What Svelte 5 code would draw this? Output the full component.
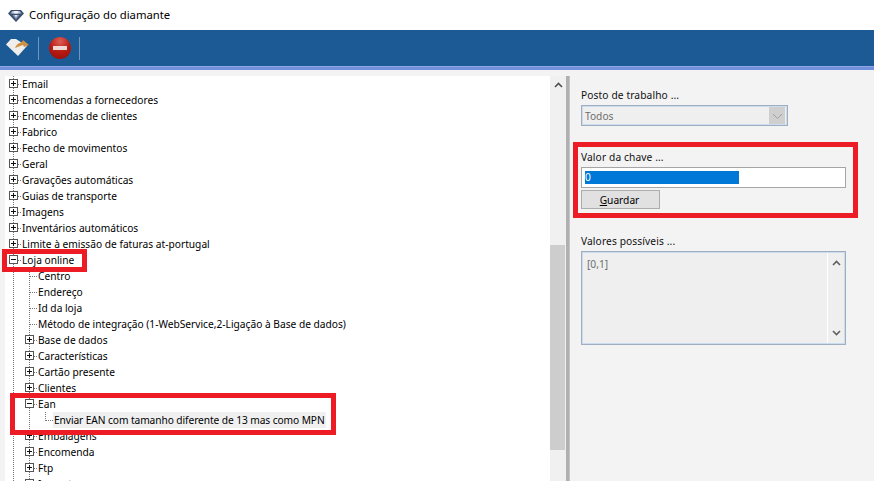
<script>
  const top = ['Email','Encomendas a fornecedores','Encomendas de clientes','Fabrico','Fecho de movimentos','Geral','Gravações automáticas','Guias de transporte','Imagens','Inventários automáticos','Limite à emissão de faturas at-portugal'];
  const rows = [
    ...top.map((t) => ({ t, d: 0, k: 'plus' })),
    { t: 'Loja online', d: 0, k: 'minus' },
    { t: 'Centro', d: 1, k: 'leaf' },
    { t: 'Endereço', d: 1, k: 'leaf' },
    { t: 'Id da loja', d: 1, k: 'leaf' },
    { t: 'Método de integração (1-WebService,2-Ligação à Base de dados)', d: 1, k: 'leaf' },
    { t: 'Base de dados', d: 1, k: 'plus' },
    { t: 'Características', d: 1, k: 'plus' },
    { t: 'Cartão presente', d: 1, k: 'plus' },
    { t: 'Clientes', d: 1, k: 'plus' },
    { t: 'Ean', d: 1, k: 'minus' },
    { t: 'Enviar EAN com tamanho diferente de 13 mas como MPN', d: 2, k: 'last', sel: true },
    { t: 'Embalagens', d: 1, k: 'plus' },
    { t: 'Encomenda', d: 1, k: 'plus' },
    { t: 'Ftp', d: 1, k: 'plus' },
    { t: 'Impostos', d: 1, k: 'plus' }
  ];
</script>

<div class="win">
  <header class="title">
    <svg class="gem" width="16" height="13" viewBox="0 0 16 13">
      <path d="M3 1h10l3 3.500L8 13 0 4.500z" fill="#3c4f72"/>
      <path d="M4.500 2 2.500 4.500h11l-2-2.500z" fill="#b8c4d6"/>
      <path d="M6.500 2 5.500 4.500h5L9.500 2z" fill="#f2f5f9"/>
      <path d="M4.500 6 8 10.500 11.500 6z" fill="#8496b3"/>
      <path d="M6.500 6 8 8.500 9.500 6z" fill="#e6ebf2"/>
    </svg>
    <span>Configuração do diamante</span>
  </header>

  <div class="toolbar">
    <svg class="tool" width="24" height="20" viewBox="0 0 24 20">
      <path d="M1 6.500 6 1h5l11 7-9 10z" fill="#efeeea"/>
      <path d="M10 10c1-3 3-5 7-6l1-2 6 5-5 2-1-2c-3 1-5 2-8 3z" fill="#cf9245"/>
    </svg>
    <i class="sep s1"></i>
    <svg class="stop" width="22" height="22" viewBox="0 0 22 22">
      <defs>
        <radialGradient id="r" cx="50%" cy="20%" r="85%">
          <stop offset="0" stop-color="#dc5f58"/>
          <stop offset=".55" stop-color="#b71c12"/>
          <stop offset="1" stop-color="#9c0f08"/>
        </radialGradient>
      </defs>
      <circle cx="11" cy="11" r="11" fill="url(#r)"/>
      <rect x="4" y="9" width="14" height="4" fill="#efd9d6"/>
    </svg>
    <i class="sep s2"></i>
  </div>
  <div class="strip"></div>

  <main class="body">
    <section class="tree">
      {#each rows as r}
        <div class="row">
          <span class="guide"></span>
          {#if r.d > 0}<span class="guide"></span>{/if}
          {#if r.d > 1}<span class="guide none"></span>{/if}
          {#if r.k === 'plus' || r.k === 'minus'}
            <span class="exp"><b class:plus={r.k === 'plus'}></b></span>
          {:else if r.k === 'last'}
            <span class="elbow"></span>
          {:else}
            <span class="tick"></span>
          {/if}
          <span class="label" class:sel={r.sel}>{r.t}</span>
        </div>
      {/each}
    </section>

    <div class="vscroll">
      <svg class="up" width="9" height="6" viewBox="0 0 9 6"><path d="M1 5l3.500-3.500L8 5" fill="none" stroke="#505050" stroke-width="1.600"/></svg>
      <div class="thumb"></div>
    </div>

    <div class="divider"></div>

    <aside class="side">
      <div class="label-r first">Posto de trabalho ...</div>
      <div class="combo">
        <span>Todos</span>
        <span class="drop"><svg width="11" height="6" viewBox="0 0 11 6"><path d="M1 1l4.500 4.500L10 1" fill="none" stroke="#a0a0a0"/></svg></span>
      </div>

      <div class="label-r second">Valor da chave ...</div>
      <div class="input"><span>0</span></div>
      <button class="save"><u>G</u>uardar</button>

      <div class="label-r third">Valores possíveis ...</div>
      <div class="area">
        <div class="text">[0,1]</div>
        <div class="abar">
          <svg width="9" height="6" viewBox="0 0 9 6"><path d="M1 5l3.500-3.500L8 5" fill="none" stroke="#606060" stroke-width="1.600"/></svg>
          <svg width="9" height="6" viewBox="0 0 9 6"><path d="M1 1l3.500 3.500L8 1" fill="none" stroke="#606060" stroke-width="1.600"/></svg>
        </div>
      </div>
    </aside>
  </main>

  <div class="mark m1"></div>
  <div class="mark m2"></div>
  <div class="mark m3"></div>
</div>

<style>
  :global(body) { margin: 0; }
  .win { position: relative; width: 874px; height: 481px; overflow: hidden; background: #f3f3f3; color: #000; font: 10.200px/16px "Noto Sans", "Open Sans", sans-serif; }
  .title { height: 30px; background: #fff; display: flex; align-items: center; gap: 5px; padding-left: 8px; font-size: 11.300px; }
  .toolbar { height: 36px; background: #1c5a96; display: flex; align-items: center; padding-left: 5px; box-sizing: border-box; }
  .tool { filter: blur(0.4px); }
  .stop { filter: blur(0.3px); }
  .sep { width: 1px; height: 23px; background: #6f97bd; }
  .s1 { margin: 0 10px 0 9px; }
  .s2 { margin-left: 8px; }
  .strip { height: 4px; background: #7390df; border-top: 1px solid #8ea6e4; box-sizing: border-box; }
  .body { display: flex; height: 411px; padding-top: 6px; box-sizing: border-box; }
  .tree { width: 545px; margin-left: 5px; box-sizing: border-box; background: #fff; overflow: hidden; }
  .row { display: flex; height: 16px; white-space: nowrap; }
  .guide { width: 16px; flex: none; background: repeating-linear-gradient(#777 0 1px, transparent 1px 2px) 8px 0 / 1px 100% no-repeat; }
  .guide.none { background: none; }
  .exp { position: relative; width: 16px; flex: none; margin-left: -16px; }
  .exp b { position: absolute; left: 4px; top: 3px; width: 9px; height: 9px; box-sizing: border-box; border: 1px solid #555; background: linear-gradient(#111, #111) center / 5px 1px no-repeat, #fff; }
  .exp b.plus { background: linear-gradient(#111, #111) center / 5px 1px no-repeat, linear-gradient(#111, #111) center / 1px 5px no-repeat, #fff; }
  .exp::after { content: ""; position: absolute; left: 13px; top: 8px; width: 3px; height: 1px; background: repeating-linear-gradient(90deg, #777 0 1px, transparent 1px 2px); }
  .tick { position: relative; width: 0; flex: none; }
  .tick::after { content: ""; position: absolute; left: -7px; top: 8px; width: 7px; height: 1px; background: repeating-linear-gradient(90deg, #777 0 1px, transparent 1px 2px); }
  .elbow { position: relative; width: 0; flex: none; }
  .elbow::after { content: ""; position: absolute; left: -8px; top: 0; width: 8px; height: 9px; box-sizing: border-box; border-left: 1px dotted #777; border-bottom: 1px dotted #777; }
  .label { padding: 0 1px; height: 16px; }
  .sel { background: #f0f0f0; letter-spacing: -0.08px; }
  .vscroll { position: relative; width: 16px; background: #f0f0f0; flex: none; }
  .up { position: absolute; left: 4px; top: 6px; }
  .thumb { position: absolute; left: 0; top: 169px; width: 15px; height: 205px; background: #cdcdcd; }
  .divider { width: 4px; flex: none; background: #b0b0b0; border-right: 1px solid #c4c4c4; box-sizing: border-box; }
  .side { flex: 1; padding-left: 11px; display: flex; flex-direction: column; align-items: flex-start; }
  .label-r { height: 16px; color: #111; letter-spacing: 0.12px; }
  .first { margin-top: 11px; }
  .second { margin-top: 23px; }
  .third { margin-top: 24px; }
  .combo { margin-top: 2px; width: 207px; height: 21px; box-sizing: border-box; border: 1px solid #a0aec0; box-shadow: inset 0 0 0 1px #c9dcf0; background: #efefef; display: flex; align-items: center; justify-content: space-between; color: #6d6d6d; padding: 0 2px 0 3px; }
  .drop { width: 16px; height: 17px; background: #cfcfcf; display: flex; align-items: center; justify-content: center; }
  .input { margin-top: 2px; width: 265px; height: 21px; box-sizing: border-box; border: 1px solid #a5a5a5; background: #fff; padding: 3px; }
  .input span { display: block; width: 154px; height: 13px; line-height: 13px; background: #0078d7; color: #fff; }
  .save { margin-top: 2px; width: 79px; height: 19px; box-sizing: border-box; border: 1px solid #adadad; background: #e1e1e1; padding: 0 2px 0 0; font: inherit; color: #000; }
  .area { margin-top: 2px; width: 265px; height: 94px; box-sizing: border-box; border: 1px solid #a0aec0; box-shadow: inset 0 0 0 1px #c9dcf0; background: #efefef; display: flex; color: #6d6d6d; padding: 1px; }
  .text { flex: 1; padding: 3px 4px; }
  .abar { width: 17px; border-left: 1px solid #fff; display: flex; flex-direction: column; justify-content: space-between; align-items: center; padding: 7px 0; box-sizing: border-box; }
  .mark { position: absolute; box-sizing: border-box; border: 5px solid #ed1c24; }
  .m1 { left: 2px; top: 249px; width: 85px; height: 23px; }
  .m2 { left: 10px; top: 393px; width: 326px; height: 42px; }
  .m3 { left: 573px; top: 142px; width: 285px; height: 76px; }
</style>
